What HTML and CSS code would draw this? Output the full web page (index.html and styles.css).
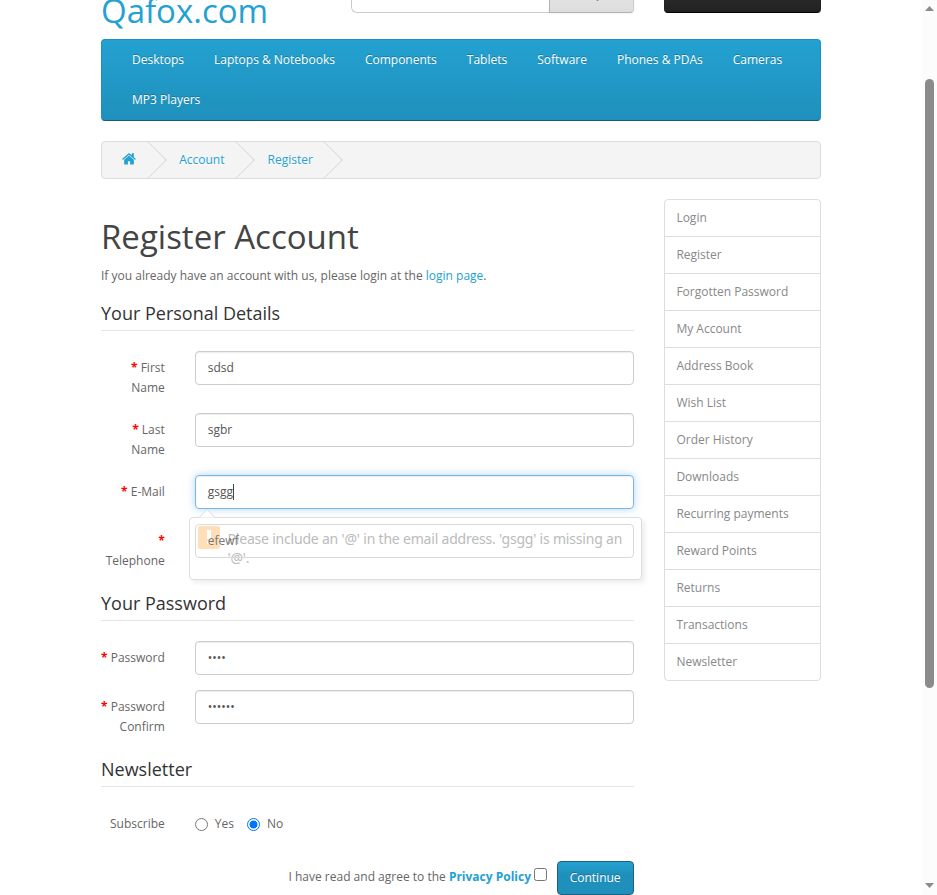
FILE: index.html
```html
<!DOCTYPE html>
<html lang="en">
<head>
<meta charset="utf-8">
<title>Register Account</title>
<link rel="stylesheet" href="styles.css">
</head>
<body>
<div class="window">
  <div class="page">
    <header class="header">
      <div class="logo">Qafox.com</div>
      <div class="search"><div class="search-input"></div><div class="search-btn"><svg width="15" height="15" viewBox="0 0 15 15"><circle cx="6" cy="6" r="4.800" fill="none" stroke="#444" stroke-width="2"/><path d="M9.500 9.500l4 4" stroke="#444" stroke-width="2.400" stroke-linecap="round"/></svg></div></div>
      <div class="cart"></div>
    </header>
    <nav class="menu">
      <a>Desktops</a><a>Laptops &amp; Notebooks</a><a>Components</a><a>Tablets</a><a>Software</a><a>Phones &amp; PDAs</a><a>Cameras</a><a>MP3 Players</a>
    </nav>
    <ul class="breadcrumb">
      <li class="home"><svg viewBox="0 0 1664 1312" width="14" height="11.500" preserveAspectRatio="none"><path fill="#23a1d1" d="M1408 768v480q0 26-19 45t-45 19H960V928H704v384H320q-26 0-45-19t-19-45V768q0-1 .5-3t.5-3l575-474 575 474q1 2 1 6zm223-69l-62 74q-8 9-21 11h-3q-13 0-21-7L832 200 140 777q-12 8-24 7-13-2-21-11l-62-74q-8-10-7-23.500t11-21.500L756 55q32-26 76-26t76 26l244 204V64q0-14 9-23t23-9h192q14 0 23 9t9 23v408l219 182q10 8 11 21.500t-7 23.500z"/></svg></li>
      <li>Account</li>
      <li>Register</li>
    </ul>
    <div class="columns">
      <main class="content">
        <h1>Register Account</h1>
        <p class="intro">If you already have an account with us, please login at the <a>login page</a>.</p>
        <h2>Your Personal Details</h2>
        <div class="group"><label class="required">First Name</label><div class="field">sdsd</div></div>
        <div class="group"><label class="required">Last Name</label><div class="field">sgbr</div></div>
        <div class="group email"><label class="required">E-Mail</label><div class="field focus">gsgg<i class="caret"></i></div>
          <div class="bubble">
            <svg class="bubble-tip" width="16" height="9" viewBox="0 0 16 9"><path d="M0 8.500L8 .7l8 7.800" fill="#fff" stroke="#ddd"/></svg>
            <span class="warn"></span>
            <span class="bubble-text">Please include an '@' in the email address. 'gsgg' is missing an '@'.</span>
          </div>
        </div>
        <div class="group tel"><label class="required">Telephone</label><div class="field">efewf</div></div>
        <h2>Your Password</h2>
        <div class="group"><label class="required">Password</label><div class="field">••••</div></div>
        <div class="group"><label class="required">Password Confirm</label><div class="field">••••••</div></div>
        <h2>Newsletter</h2>
        <div class="group subscribe"><label>Subscribe</label>
          <div class="radios"><span class="radio"></span><span class="yes">Yes</span><span class="radio on"></span><span>No</span></div>
        </div>
        <div class="buttons"><span class="agree">I have read and agree to the <b>Privacy Policy</b></span><span class="check"></span><span class="continue">Continue</span></div>
      </main>
      <aside class="sidebar">
        <a>Login</a><a>Register</a><a>Forgotten Password</a><a>My Account</a><a>Address Book</a><a>Wish List</a><a>Order History</a><a>Downloads</a><a>Recurring payments</a><a>Reward Points</a><a>Returns</a><a>Transactions</a><a>Newsletter</a>
      </aside>
    </div>
  </div>
  <div class="scrollbar">
    <svg width="9" height="5" viewBox="0 0 9 5"><path d="M0 5L4.500 0 9 5z" fill="#8b8b8b"/></svg>
    <div class="thumb"></div>
    <svg width="9" height="5" viewBox="0 0 9 5"><path d="M0 0h9L4.500 5z" fill="#8b8b8b"/></svg>
  </div>
</div>
</body>
</html>
```
FILE: styles.css
```css
* { box-sizing: border-box; }
body { margin: 0; font: 12px/20px "Open Sans", sans-serif; color: #666; background: #fff; overflow: hidden; }
.window { display: flex; height: 895px; overflow: hidden; }
.page { width: 922px; padding: 0 101px; flex: none; }

.header { height: 39px; display: flex; align-items: flex-start; overflow: hidden; }
.logo { width: 250px; font-size: 33px; line-height: 36px; color: #23a1d1; margin-top: -7px; }
.search { display: flex; width: 283px; margin: -32px 30px 0 0; }
.search-input { width: 198px; height: 45px; border: 1px solid #ccc; border-right: 0; border-radius: 6px 0 0 6px; }
.search-btn { display: flex; justify-content: center; width: 85px; height: 45px; padding-top: 17px; border: 1px solid #bbb; border-color: #ccc #ccc #b3b3b3 #b3b3b3; border-radius: 0 4px 4px 0; background: linear-gradient(#eee, #ddd); box-shadow: 0 1px 2px rgba(0,0,0,.05); }
.cart { width: 157px; height: 45px; margin-top: -32px; border: 1px solid #222; border-bottom-color: #000; border-radius: 4px; background: linear-gradient(#363636, #222); }

.menu { height: 82px; display: flex; flex-wrap: wrap; align-content: flex-start; padding: 0 15px; border: 1px solid #1f90bb; border-bottom-color: #145e7a; border-radius: 4px; background: linear-gradient(#23a1d1, #1f90bb); color: #fff; text-shadow: 0 -1px 0 rgba(0,0,0,.25); }
.menu a { padding: 10px 15px; }

.breadcrumb { list-style: none; display: flex; height: 38px; margin: 20px 0; padding: 8px 0; border: 1px solid #ddd; border-radius: 4px; background: #f4f4f4; overflow: hidden; color: #23a1d1; text-shadow: 0 1px 0 #fff; }
.breadcrumb li { position: relative; padding: 0 20px; margin-right: 3px; white-space: nowrap; }
.breadcrumb li::after { content: ""; position: absolute; top: -4px; right: -4.500px; width: 27px; height: 27px; border-right: 1px solid #ddd; border-bottom: 1px solid #ddd; transform: rotate(-45deg); }
.breadcrumb svg { display: block; margin: 3px 0 0; }
.breadcrumb .home { width: 54.200px; }

.columns { display: flex; gap: 30px; align-items: flex-start; }
.content { width: 533px; flex: none; padding-top: 19px; }
h1 { margin: 0 0 11px; font-size: 33px; line-height: 37px; font-weight: 400; color: #444; }
.intro { margin: 0 0 10px; }
.intro a { color: #23a1d1; }
h2 { margin: 0 0 20px; padding: 7px 0; border-bottom: 1px solid #e5e5e5; font-size: 18px; line-height: 20px; font-weight: 400; color: #333; }
.group { position: relative; display: flex; align-items: flex-start; margin-bottom: 15px; }
.group label { width: 63.800px; margin-right: 30px; padding-top: 7px; text-align: right; flex: none; }
.required::before { content: "* "; color: #f00; font-weight: 700; }
.field { width: 439px; height: 34px; padding: 6px 12px; border: 1px solid #ccc; border-radius: 4px; background: #fff; box-shadow: inset 0 1px 1px rgba(0,0,0,.075); color: #555; }
.focus { border-color: #7ab6e5; box-shadow: inset 0 1px 1px rgba(0,0,0,.075), 0 0 8px rgba(102,175,233,.5); }
.email { z-index: 2; }
.tel { z-index: 3; }
.tel .field { background: none; border-color: #d9d9d9; box-shadow: none; color: #777; }
.caret { display: inline-block; width: 1px; height: 16px; background: #444; vertical-align: -4px; }
.bubble { position: absolute; left: 87.500px; top: 42px; width: 453px; height: 63px; border: 1px solid #ddd; border-radius: 4px; background: #fff; box-shadow: 3px 3px 5px rgba(0,0,0,.07); padding: 8px 8px 0 8px; display: flex; }
.bubble-tip { position: absolute; left: 9px; top: -9px; }
.warn { position: relative; width: 22px; height: 23px; background: #ffdfb8; border-radius: 2px; flex: none; }
.warn::before { content: ""; position: absolute; left: 9px; top: 4px; width: 4px; height: 9px; background: #fff; }
.warn::after { content: ""; position: absolute; left: 9px; top: 15px; width: 4px; height: 3px; background: #fff; }
.bubble-text { margin: 3px 0 0 8px; font: 14px/19px "Noto Sans", sans-serif; letter-spacing: -.2px; color: #bbb; }
.subscribe { height: 34px; }
.radios { display: flex; align-items: center; padding-top: 7px; }
.radio { width: 13px; height: 13px; margin-right: 7px; margin-top: 1px; border: 1px solid #767676; border-radius: 50%; }
.yes { margin-right: 13px; }
.radio.on { border-color: #0075ff; background: radial-gradient(circle, #0075ff 3.700px, #fff 4.300px); }
.buttons { display: flex; justify-content: flex-end; margin-top: 20px; }
.agree { padding-top: 6px; }
.buttons b { color: #23a1d1; }
.check { width: 13px; height: 13px; margin: 7px 10px 0 3px; border: 1px solid #767676; border-radius: 2.500px; }
.continue { width: 77px; height: 34px; padding-left: 11.700px; line-height: 32px; color: #fff; border: 1px solid #1b5f84; border-radius: 4px; background: linear-gradient(#23a1d1, #1f90bb 40%); text-shadow: 0 -1px 0 rgba(0,0,0,.25); }

.sidebar { width: 157px; height: 482px; border: 1px solid #ddd; border-radius: 4px; }
.sidebar a { display: block; height: 37px; padding: 8px 11.400px; border-bottom: 1px solid #ddd; color: #888; }
.sidebar a:last-child { height: 36px; border-bottom: 0; }

.scrollbar { width: 15px; height: 895px; background: #fcfcfc; display: flex; flex-direction: column; align-items: flex-start; padding: 6px 0 7px 3px; }
.thumb { width: 9px; height: 609px; margin: 68px 0 auto; border-radius: 5px; background: #8b8b8b; }
```
